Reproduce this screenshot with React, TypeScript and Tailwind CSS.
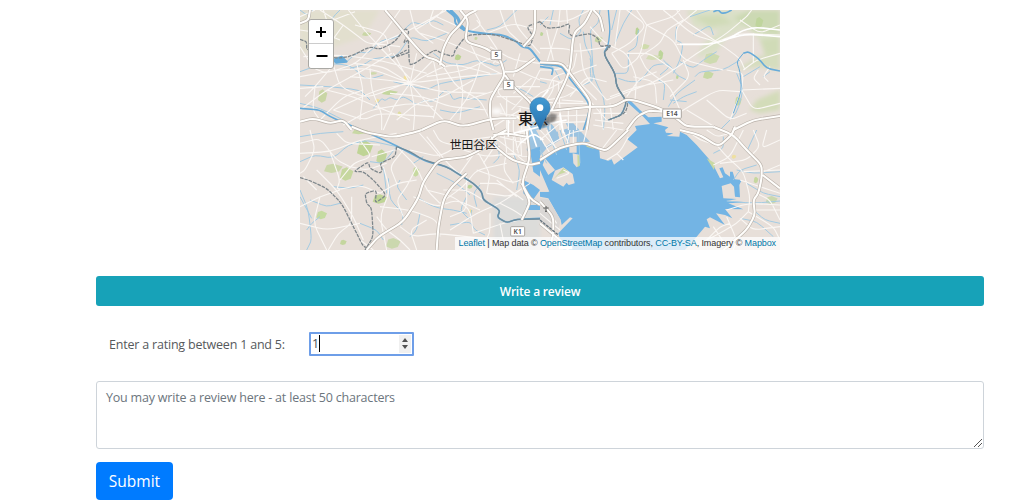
import { useState } from "react";

const NW = "translate(0 0)";
const NE = "translate(720 0)";
const SW = "translate(0 360)";
const SE = "translate(720 360)";

type Layer = { at: string; d: string };

// Rounds the corners of polylines written as "Mx yLx yLx y".
function smooth(d: string): string {
  return d
    .split("M")
    .filter(Boolean)
    .map((line) => {
      const p = line.split("L").map((s) => s.trim().split(" ").map(Number));
      const last = p.length - 1;
      let out = `M${p[0][0]} ${p[0][1]}`;
      for (let i = 1; i < last; i++) {
        const f = 0.3;
        const ax = p[i][0] + (p[i - 1][0] - p[i][0]) * f;
        const ay = p[i][1] + (p[i - 1][1] - p[i][1]) * f;
        const bx = p[i][0] + (p[i + 1][0] - p[i][0]) * f;
        const by = p[i][1] + (p[i + 1][1] - p[i][1]) * f;
        out += `L${ax} ${ay}Q${p[i][0]} ${p[i][1]} ${bx} ${by}`;
      }
      return `${out}L${p[last][0]} ${p[last][1]}`;
    })
    .join("");
}

const minorRoads: Layer[] = [
  {
    at: NW,
    d: "M0 20L45 0M60 0L130 45L215 110L330 60L440 0M100 30L165 5M130 45L90 100M145 0L205 75L330 205M165 45L255 70L270 125M0 110L40 175L80 190L170 160L240 85L300 0M0 200L110 180L210 175L330 220L480 200L610 190M15 260L45 230L100 165M0 300L80 240L200 175L275 130M80 240L160 260L230 290L330 330M45 230L38 300L60 330M100 165L120 230L200 265L330 215M330 0L345 60L400 100M345 60L410 20L430 0M410 20L520 70M400 0L385 45L460 75M330 220L250 170L160 160M330 220L260 210L150 200M330 220L280 130M330 220L350 130M330 220L400 150M330 220L450 160L570 190M330 220L420 245L560 250M330 220L390 290L430 330M330 220L345 300L340 360M330 220L280 290L250 360M330 220L230 240L100 300M100 300L190 330L240 310L400 320M170 160L190 240L180 330M210 175L215 240L245 310L245 360M430 170L470 230L540 270L570 330M470 160L490 240L480 330M400 150L420 245L400 325M510 100L540 160L600 190M530 30L560 70L600 130L580 160M560 70L640 40L710 60M600 0L620 60L665 100M640 0L650 50L720 130M500 270L620 230L720 230M380 200L500 180L600 130M520 0L545 45L500 70M610 200L590 250L650 290L720 300M450 330L500 270L530 200L540 160M620 260L620 360M580 350L660 300M640 250L700 200M650 180L720 210M0 60L70 70L120 90M70 0L90 60L70 130M0 235L70 230M60 330L130 260L190 240M270 250L370 260L450 290L560 300M360 70L430 90L520 130L600 160M220 100L300 110M660 130L640 200M10 140L120 135L240 150L380 190M290 330L350 280L430 260L520 210M130 345L210 300L330 280L400 290M590 260L680 260L720 270M635 300L690 240L720 180M600 310L720 330M570 110L640 150L720 160M600 280L630 340M640 310L640 360M660 290L665 360M690 275L720 250",
  },
  {
    at: NE,
    d: "M0 115L70 115L110 125L210 110M0 30L80 35L150 0M60 0L55 50L35 110L20 160M20 60L40 150M80 0L85 70M120 100L130 190L200 270M150 50L195 100L260 130L290 200L285 270M260 0L320 45L270 100L215 130M320 45L400 90L430 150L550 180M320 45L290 0M320 45L400 20L420 0M370 0L460 75L530 95L600 145L615 180M410 0L430 30L530 95M410 103L510 103L560 70L620 20L635 0M530 95L470 130L400 180L345 215L200 270M215 130L250 180L300 140L320 45M300 140L320 180L390 230L420 300M280 200L345 215L350 280M530 95L600 70L720 75M560 180L610 190L605 240L570 330M605 240L720 235M600 245L530 240L430 300L400 320M430 150L450 200L390 260M610 180L650 150L720 130M600 30L660 70L720 45M640 70L640 160M0 205L60 215L130 250L200 330M0 250L50 225L100 190L170 165M55 215L60 300M90 260L140 200L200 215M100 200L170 270M20 270L80 260L150 210M0 180L50 180L90 165M210 260L290 230L400 210M260 260L300 205L350 185M470 0L410 50L408 100M500 270L570 330L620 310M605 240L640 300L720 280M655 180L640 205L660 225M690 170L670 200L685 215M160 310L260 310M165 330L250 340M180 290L190 360M210 280L220 360M110 130L100 180L40 200L20 250M225 110L240 0M430 30L380 60L360 100L300 140M440 300L540 360M400 180L330 130L260 130M0 275L60 280L150 280M0 320L150 315M0 340L140 335M30 300L30 360M60 295L60 360M85 300L85 360M110 290L110 360M0 300L40 240L40 210M65 270L130 275M160 345L250 360",
  },
  {
    at: SW,
    d: "M0 70L90 65L180 30L290 10M0 40L60 25L110 90L150 110M30 0L45 60L15 120L0 130M90 65L120 150L110 180L180 165L240 190M50 120L110 180L160 260L190 330M0 230L60 200L120 180M0 280L80 300L180 280M60 200L40 280L80 360M85 360L115 310L155 280L155 200M180 30L215 80L160 100L120 150M215 80L300 55M290 50L350 110L380 180L420 220M350 110L320 170L290 210L310 260M330 60L420 80L500 30L580 20M350 0L390 45L420 80M400 0L420 35L480 50M240 190L290 160L350 150M240 230L330 240L410 270L420 320M230 260L260 300L300 330L330 360M300 290L340 320L410 310L500 320L600 330M340 200L410 230L470 210L540 240M420 220L490 170L530 120L620 100M380 180L460 200L510 240L520 310M450 300L530 250L600 220L660 180M480 130L530 60L600 50M530 60L570 130L560 190M530 120L640 160L680 140M550 100L590 40M490 60L560 80L640 70M620 60L610 120L640 160M560 190L630 200L690 160M540 160L600 160L670 210M600 220L640 240L670 260M500 140L500 240L450 260M570 250L570 310L540 360M430 180L500 180L550 210M520 310L610 280L660 270M110 10L140 40L240 45M150 110L200 120L260 100M10 140L50 180M250 110L270 180L240 260L260 360M310 60L270 110L290 160M610 330L600 280M380 270L330 300L350 360M610 0L620 60M640 0L655 70M580 20L620 50L680 100M580 20L500 90M180 330L220 360M640 20L640 80M660 0L665 80M600 20L680 40M610 70L690 80M590 150L650 200M680 0L650 60M380 20L450 110L530 170",
  },
  {
    at: SE,
    d: "M440 0L480 30L530 45M500 0L530 20L570 10M540 100L620 90L660 50L640 0M610 125L720 120M680 0L665 55L720 30M530 45L560 80L610 125L630 200L625 245M520 105L570 80L610 0M600 150L720 190M560 240L625 220L720 225M640 240L720 240M625 245L590 280L540 310L480 340M625 245L700 290L720 330M600 265L640 300L720 290M560 260L590 330L580 360M520 290L560 350M500 330L540 290L570 280M650 190L690 210L720 270M660 130L720 105M200 90L240 65L265 20M230 70L250 90M50 145L90 130L70 120M15 225L50 280M0 250L60 300M180 65L230 0M130 40L140 0M80 50L90 0M50 60L20 0M30 70L0 20M100 45L100 0M0 0L50 55M0 30L60 -20M20 50L90 10L130 0M60 -20L85 40",
  },
];

const streams: Layer[] = [
  {
    at: NW,
    d: "M0 0L20 15L40 0M140 155L175 125L205 130L245 90L290 85L335 35L370 45L400 30L430 45M150 175L190 165L220 145L290 140L330 80L380 95L440 70M0 185L70 160L150 165L200 210L250 195M0 225L90 230L180 240L210 270M220 295L245 265L255 272L270 262L290 270L310 260L330 270L350 285L375 270L400 275L435 240L450 250L460 270L480 262L500 265L560 270M280 215L380 240L420 220L510 205L590 190M400 130L440 160L490 165L530 150L580 165M60 85L100 20L120 0M560 60L600 50L650 0M0 280L60 295L130 330L150 345M420 300L470 310L540 290M610 230L660 235L700 260M570 160L590 170L620 150M40 150L100 140",
  },
  {
    at: NE,
    d: "M60 70L95 90L125 65L115 30L130 0M130 65L135 105L155 145L150 180L155 215L130 225M155 215L160 195L155 110L150 60L175 40L180 0M150 145L165 210L190 260L195 300L190 360M225 100L250 40L275 0M215 60L230 0M265 130L265 190L225 190M265 125L290 110L295 60M235 205L265 215L300 215L320 190L340 165L385 160L410 195L440 210M370 270L375 220L355 210M385 290L410 250L465 210M400 280L430 260L470 245M370 150L390 170L360 195M420 155L460 175L490 150L530 125M465 200L480 185L550 180L600 150M400 190L420 150L430 100L405 90L410 50M450 20L510 0M460 75L510 45L520 75M690 185L670 200M10 165L40 170L60 210M0 215L20 220M590 190L610 240L590 310L540 360M440 275L390 270M610 200L660 170M0 45L25 20M40 0L30 45",
  },
  {
    at: SW,
    d: "M0 20L60 10L130 5M0 95L45 75L100 85L145 45L200 30L290 50M30 210L80 230L120 220M20 300L35 280L60 260M0 180L25 240L35 330L20 360M0 200L35 265M290 50L250 100L210 95M260 190L250 110M265 145L270 210L310 250L305 285M300 150L290 170L320 210M340 100L370 80M350 200L390 225L420 235L460 240L500 250M410 130L470 160L510 195M450 285L510 275L525 300L555 315M540 165L520 190L530 230M500 200L480 240L510 270L515 240M640 70L660 120L650 180M100 170L150 175L190 165M180 280L230 300L250 330M360 250L350 300L330 320M590 40L600 80L580 100",
  },
  { at: SE, d: "M590 120L640 130L720 125M560 213L640 220L720 213M640 240L675 270L720 280M620 160L670 190L720 200M580 150L600 120L650 105M600 265L650 275L700 320M520 70L550 55L550 20M30 20L50 75M0 60L20 100M60 0L80 60M115 0L120 100M620 65L650 0" },
];

const highways: Layer[] = [
  { at: NW, d: "M255 0L285 35L330 90L375 140L410 150L435 170M420 165L430 115L450 75L480 45L500 15L530 0M480 0L505 30L495 95L560 115L600 145L615 195L590 235L570 270L570 320L580 360M615 195L640 230L690 275L700 300M615 185L650 185L705 145M0 335L40 325L90 340L130 330L155 360M365 360L430 330L490 350L580 325L650 325M0 40L25 30L30 0M705 0L705 70L670 110" },
  { at: NE, d: "M155 0L135 40L100 70L90 185L35 300M160 0L180 20L190 65M0 157L65 160L90 190L150 270L150 300L140 360M0 302L35 302L150 290L220 290L265 265L360 295L410 325L440 350L520 350M260 360L290 320L325 302L370 305M580 360L640 330L720 318" },
  { at: SW, d: "M155 -10L200 8L280 22L350 5L365 0M200 360L235 320L310 275L355 205L370 155L415 90L465 85L500 80L550 55L580 20L620 0M410 360L415 290L430 210L455 170L500 130M575 20L580 45L635 90L690 105L720 98M665 270L680 240L690 215L665 160L690 85L680 0M665 160L690 205L720 225M580 15L620 10L680 20" },
  { at: SE, d: "M0 90L60 52L130 38L175 55L200 62L265 0M420 0L480 15L535 50L575 15L585 -10M520 -10L580 15L620 60L665 105L665 145L655 190L640 210L645 255L620 300L550 360M668 135L720 175M0 215L40 260L40 320L20 360M0 280L60 330L85 360" },
];

const borders: Layer[] = [
  { at: NW, d: "M0 88L20 95L20 120L60 125L105 145L150 140L210 110L240 118L285 95L315 55L328 65L310 100L325 90M275 145L320 120M290 140L325 128M325 90L328 165L345 160L405 118L425 130L460 140L465 120L500 75L580 72L650 95L690 110L700 80L680 50L720 35" },
  { at: NE, d: "M0 35L20 55L60 52L90 40L85 70L100 80L150 70L175 85L180 110L215 105L190 130L225 190L230 230L265 280L255 310L205 330" },
  { at: SW, d: "M0 143L30 152L80 175L125 220L165 300L190 350L210 355M290 50L285 80L240 100L247 120L240 130L210 115L205 95L160 125L190 125L220 150L260 195L225 220L230 180L195 190L200 220L215 235L220 320L195 360" },
];

function Strokes({ layers, color, width, dash }: { layers: Layer[]; color: string; width: number; dash?: string }) {
  return (
    <>
      {layers.map((l) => (
        <path key={l.at} transform={l.at} d={smooth(l.d)} fill="none" stroke={color} strokeWidth={width} strokeDasharray={dash} strokeLinejoin="round" />
      ))}
    </>
  );
}

const parks: [number, number, number, number, string][] = [
  [200, 72, 14, 6, "#c9d6a5"], [68, 258, 14, 20, "#c9d6a5"], [270, 248, 24, 7, "#c4d69e"], [474, 142, 10, 9, "#bcd391"],
  [316, 204, 6, 8, "#f1e0a0"], [232, 272, 7, 6, "#f1e0a0"], [298, 312, 6, 8, "#dfdda0"], [60, 110, 30, 12, "#dadcc1"],
  [220, 190, 12, 4, "#cfd9ac"], [195, 415, 24, 24, "#bfd495"], [245, 440, 16, 22, "#c2d59c"], [100, 475, 28, 14, "#cbd7aa"],
  [140, 492, 20, 20, "#c6d79f"], [65, 615, 16, 13, "#c5dba1"], [348, 485, 10, 15, "#c7daa0"], [240, 567, 22, 14, "#bfd596"],
  [280, 700, 22, 16, "#cbd8ae"], [130, 697, 10, 8, "#c4d69e"], [512, 604, 6, 6, "#efdf9b"], [180, 365, 24, 8, "#c8d8a4"],
  [1012, 64, 6, 12, "#b9d294"], [1035, 110, 14, 8, "#cfdbac"], [1082, 135, 8, 15, "#bdd59a"], [1060, 142, 22, 8, "#d5dcb8"],
  [896, 88, 12, 10, "#c5d5a3"], [1235, 145, 24, 17, "#cedbb0"], [1225, 195, 16, 12, "#c7d8a4"], [1378, 37, 12, 16, "#bfd59d"],
  [1315, 273, 10, 14, "#c8d9a1"], [1132, 201, 4, 6, "#bdd59a"], [1368, 510, 7, 10, "#c6d79f"], [1302, 440, 7, 6, "#efe0a0"],
  [1415, 570, 18, 12, "#cbd8ae"], [528, 85, 5, 5, "#c9d6a5"], [510, 530, 8, 6, "#bdd59a"], [725, 72, 5, 6, "#bdd59a"],
];

function Shield({ x, y, w, label }: { x: number; y: number; w: number; label: string }) {
  return (
    <g>
      <rect x={x - w / 2} y={y - 14} width={w} height="28" rx="3" fill="#fff" stroke="#aaa5a0" strokeWidth="3" />
      <text x={x} y={y + 7} textAnchor="middle" fontSize="20" fontWeight="600" fill="#4c4c4c" className="font-['Noto_Sans',sans-serif]">{label}</text>
    </g>
  );
}

function MapDrawing() {
  return (
    <svg viewBox="0 0 1440 720" className="block h-60 w-[480px]">
      <defs>
        <filter id="soft" x="-20%" y="-20%" width="140%" height="140%"><feGaussianBlur stdDeviation="7" /></filter>
        <filter id="shade" x="-20%" y="-20%" width="140%" height="140%"><feGaussianBlur stdDeviation="3" /></filter>
        <linearGradient id="pin" x1="0" y1="0" x2="0" y2="1"><stop stopColor="#429ad3" /><stop offset="1" stopColor="#2670ac" /></linearGradient>
      </defs>
      <rect width="1440" height="720" fill="#e7dfd9" />
      <g filter="url(#soft)">
        <path d="M0 0H240L190 80L90 115L0 130Z" fill="#e2dfce" />
        <path d="M1160 0H1440V90L1400 110L1340 55L1280 80L1250 125L1190 145L1210 100L1260 65L1180 50Z" fill="#dae0c7" />
        <path d="M1300 25L1350 0H1440V75L1370 65Z" fill="#ccd9b3" />
        <path d="M1180 20L1260 15L1300 40L1230 50ZM1380 90L1440 80V170L1400 150Z" fill="#d0dbb7" />
        <path d="M1310 180L1370 140L1440 130V180L1380 170Z" fill="#d5ddbe" />
        <path d="M1350 300L1370 270L1440 240V300L1380 310Z" fill="#d3dcb9" />
        <path d="M580 560H720V720H580Z" fill="#dcdcda" />
        <ellipse cx="590" cy="304" rx="18" ry="9" fill="#fff" />
        <ellipse cx="690" cy="365" rx="38" ry="28" fill="#f5f0eb" />
      </g>
      {parks.map(([cx, cy, rx, ry, fill]) => (
        <path key={`${cx}-${cy}`} d={`M${cx - rx} ${cy + ry * 0.6}L${cx - rx * 0.7} ${cy - ry * 0.7}L${cx} ${cy - ry}L${cx + rx} ${cy - ry * 0.4}L${cx + rx * 0.6} ${cy + ry * 0.7}L${cx - rx * 0.2} ${cy + ry}Z`} fill={fill} />
      ))}
      <g transform={SE} fill="#73b4e4">
        <path d="M0 95L60 52L130 38L178 58L180 85L205 92L215 88L222 104L293 52L262 28L290 0L285 -12L330 -18L310 -40L260 -85L270 -90L300 -60L325 -38L365 -40L365 -25L340 -20L385 -8L375 0L378 8L400 10L380 18L418 20L420 5L440 15L470 45L505 85L520 105L540 145L550 142L538 115L548 112L555 130L570 140L570 125L578 125L585 148L605 150L598 165L600 202L585 200L582 170L572 160L545 168L550 205L590 207L560 213L622 217L565 220L610 238L555 237L577 265L555 255L528 250L555 285L510 262L500 268L510 295L495 290L470 320L435 360H70L55 310L98 265L90 262L65 285L62 270L25 205L0 200V185L25 185L0 150Z" />
        <path d="M-30 -20L10 -35L50 -5L60 30L20 55L-10 90L-40 60ZM60 -20L100 -20L150 35L80 40Z" opacity=".65" />
        <path d="M-30 60L0 50V140L-20 125ZM-50 150L-20 165L0 180L-25 215L-50 190ZM-40 225L0 225V240H-40Z" />
      </g>
      <g transform={SE} fill="#e7dfd9">
        <path d="M35 150L45 122L70 112L98 132L104 160L86 165L80 158L70 170Z" />
        <path d="M88 20H110V68H88ZM98 70L120 75V105L110 112L100 100ZM15 85L45 120L25 135L8 105ZM0 120L28 185L0 185ZM-12 0L20 -8L38 35L15 50ZM30 -30L70 -35L85 -5L50 5ZM55 15L75 5L80 35L62 40ZM110 -25L150 -28L160 0L120 5Z" />
        <path d="M38 150L70 114L85 124L55 134Z" fill="#c9d9a2" />
        <path d="M112 76H120V105L113 112ZM138 42L165 48L160 56L140 50Z" fill="#c9d9a2" />
        <path d="M500 85L525 100L522 120Z" fill="#c9d9a2" />
      </g>
      <path d="M720 565L745 567L782 630L775 660L720 650Z" fill="#dad7d5" />
      <Strokes layers={streams} color="#a3cbe3" width={3} />
      <Strokes layers={minorRoads} color="#faf7f4" width={3.3} />
      <g fill="none" stroke="#67abd9" strokeWidth="6" strokeLinejoin="round">
        <path d={smooth("M440 0L465 20L465 40L490 60L540 70L610 75L650 95L665 110L690 115L720 155")} />
        <path d={smooth("M450 0L475 25L480 45L495 60")} strokeWidth="10" />
        <path d="M100 150L125 140L140 155L108 158Z" fill="#67abd9" />
        <path d={smooth("M0 295L60 300L90 320L150 345L240 385L285 405L380 455L440 470L480 495L520 520L545 545L550 570L600 600L592 622L620 638L650 628L720 625")} strokeWidth="5" />
        <path d={smooth("M720 162L785 168L805 200L865 275L868 305L850 360M720 170L760 175L755 195")} strokeWidth="5" />
        <path d={smooth("M925 0L930 60L925 105L910 130L945 190L950 230L980 275L965 315L925 330")} strokeWidth="4" />
        <path d={smooth("M1330 130L1345 125L1375 145L1400 175L1440 183M1240 5L1255 0L1265 10L1280 8L1295 0")} strokeWidth="5" />
        <path d={smooth("M1300 310L1325 240L1320 185L1310 155L1330 130")} strokeWidth="3" />
      </g>
      <Strokes layers={borders} color="#7d868b" width={3.8} dash="11 3" />
      <path d={smooth("M290 410L330 425L370 450L440 470L480 495L520 520L545 545L550 570L600 600L592 622L620 638L650 628L720 627M930 105L910 130L945 190L950 230L980 275L965 315L925 330")} fill="none" stroke="#6f8c9c" strokeWidth="4" />
      <Strokes layers={highways} color="#b9b1a9" width={10} />
      <Strokes layers={highways} color="#fffefc" width={6.3} />
      <g fill="none" stroke="#fff" strokeWidth="5">
        <path d={smooth("M1140 103L1230 103L1280 90L1330 60L1370 52L1440 60M1270 90L1340 72L1440 80")} />
        <path d={smooth("M625 330L625 380M650 320L690 350L710 410M640 370L720 350M660 400L700 370L730 390M750 340L800 330M780 310L790 370M720 270L745 240")} />
      </g>
      <path d="M738 588V606M730 594H746M735 604H741" stroke="#5d5d5d" strokeWidth="3" />
      <path d="M720 630L775 675" stroke="#65737d" strokeWidth="4" strokeDasharray="9 3" />
      <Shield x={589} y={135} w={32} label="5" />
      <Shield x={626} y={225} w={32} label="5" />
      <Shield x={1116} y={311} w={56} label="E14" />
      <Shield x={653} y={664} w={42} label="K1" />
      <path d="M777 708H817V718H777Z" fill="#fff" />
      <g className="font-['Noto_Sans_CJK_JP',sans-serif]" fill="#171717" stroke="#eee7e1" strokeWidth="3" paintOrder="stroke">
        <text x="654" y="341" fontSize="46" fontWeight="500">東京</text>
        <text x="449" y="418" fontSize="35.5">世田谷区</text>
      </g>
      <path d="M720 356L734 325L752 310L772 314L766 332Z" fill="#202020" opacity=".5" filter="url(#shade)" />
      <path d="M720 359L699 315C692 308 690 301 690 293C690 276 703 263 720 263S750 276 750 293C750 301 748 308 741 315Z" fill="url(#pin)" stroke="#3479ad" strokeWidth="2" />
      <circle cx="720" cy="293" r="10" fill="#fff" />
    </svg>
  );
}

export default function App() {
  const [rating, setRating] = useState(1);
  return (
    <main className="h-[503px] w-full overflow-hidden bg-white pt-[10px] pr-[37px] pl-24 font-['Open_Sans','Noto_Sans',sans-serif]">
      <section className="relative ml-[204px] h-60 w-[480px] overflow-hidden">
        <MapDrawing />
        <div className="absolute top-[9px] left-[8px] flex w-[26px] flex-col overflow-hidden rounded-[3px] border border-[#aaa9a5] bg-white text-black">
          <button className="flex h-6 items-center justify-center border-b border-[#ccc]" aria-label="Zoom in">
            <svg viewBox="0 0 12 12" className="size-3"><path d="M6 1V11M1 6H11" stroke="currentColor" strokeWidth="2" /></svg>
          </button>
          <button className="flex h-6 items-center justify-center pl-px" aria-label="Zoom out">
            <svg viewBox="0 0 12 12" className="size-3"><path d="M.5 6H11.5" stroke="currentColor" strokeWidth="2" /></svg>
          </button>
        </div>
        <div className="absolute right-0 bottom-0 h-[13px] bg-white/75 pr-[4px] pl-1 font-['Liberation_Sans',Arial,sans-serif] text-[9px] leading-[13px] tracking-[-0.1px] whitespace-nowrap text-[#333]">
          <span className="text-[#0078a8]">Leaflet</span> | Map data © <span className="text-[#0078a8]">OpenStreetMap</span> contributors, <span className="text-[#0078a8]">CC-BY-SA</span>, Imagery © <span className="text-[#0078a8]">Mapbox</span>
        </div>
      </section>
      <h2 className="mt-[26px] flex h-[30px] items-center justify-center rounded-[3px] bg-[#17a2b8] pt-px text-[12px] font-semibold tracking-[-0.2px] text-white">Write a review</h2>
      <form onSubmit={(e) => e.preventDefault()}>
        <div className="mt-[26px] flex h-[23px] items-center">
          <label className="w-[213px] pt-[3px] pl-[13px] text-[12.5px] tracking-[-0.2px] whitespace-nowrap text-[#56595c]">Enter a rating between 1 and 5:</label>
          <div className="flex h-6 w-[105px] items-center rounded-[1px] border-2 border-[#6e9ee8] bg-white pr-px pl-px text-[12.5px] text-[#495057]">
            <span className="pt-px">{rating}</span>
            <span className="h-[17px] w-px bg-black" />
            <div className="ml-auto flex h-[18px] w-3 flex-col items-center justify-center gap-[3px] bg-[#f0f0f0]">
              <button type="button" aria-label="Increase" onClick={() => setRating(Math.min(5, rating + 1))}><svg viewBox="0 0 6 4" className="block h-1 w-[6px]"><path d="M0 4L3 0L6 4Z" fill="#505050" /></svg></button>
              <button type="button" aria-label="Decrease" onClick={() => setRating(Math.max(1, rating - 1))}><svg viewBox="0 0 6 4" className="block h-1 w-[6px]"><path d="M0 0L3 4L6 0Z" fill="#505050" /></svg></button>
            </div>
          </div>
        </div>
        <div className="relative mt-[26px] h-[68px] rounded-[3px] border border-[#ced4da] px-[9px] pt-[6px] text-[12.5px] leading-[20px] tracking-[-0.2px] text-[#6c757d]">
          You may write a review here - at least 50 characters
          <svg viewBox="0 0 10 10" className="absolute right-0 bottom-0 size-[10px]"><path d="M1 9L9 1M5 9L9 5" stroke="#555" strokeWidth="1" /></svg>
        </div>
        <button className="mt-[13px] flex h-[38px] w-[77px] items-center justify-center rounded bg-[#007bff] pt-[2px] text-[15.5px] text-white">Submit</button>
      </form>
    </main>
  );
}
